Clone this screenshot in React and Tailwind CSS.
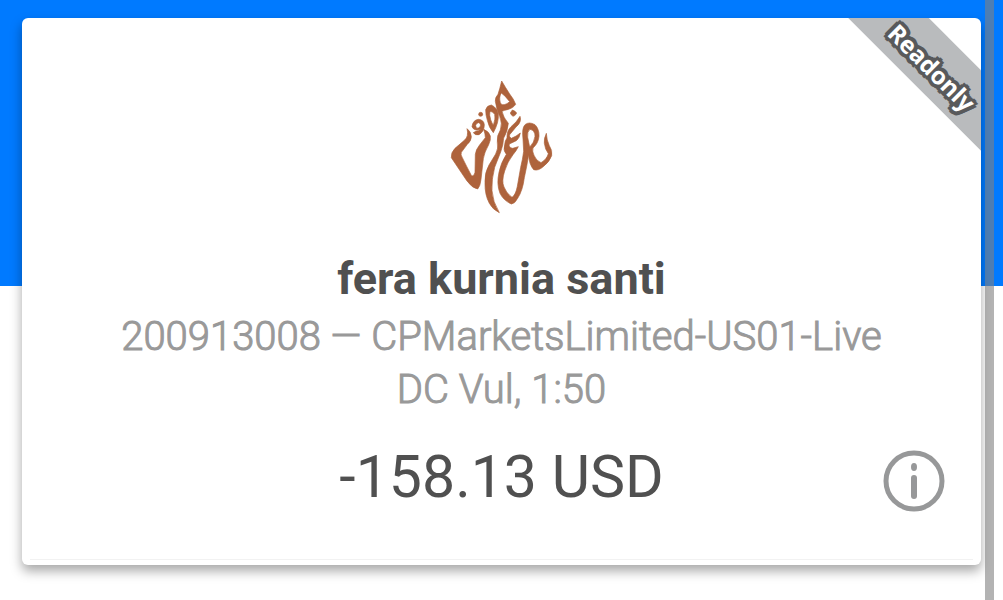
const account = {
  name: "fera kurnia santi",
  login: "200913008",
  server: "CPMarketsLimited-US01-Live",
  broker: "DC Vul",
  leverage: "1:50",
  balance: "-158.13",
  currency: "USD",
};

const BrokerLogo = () => (
  <svg
    viewBox="6 0 420 450"
    className="w-[140px] h-[150px]"
    fill="#ae633c"
    stroke="#ae633c"
    strokeWidth="2"
    strokeLinejoin="round"
    role="img"
    aria-label="Broker logo"
  >
    <path d="M111 176 Q123 184 124 200 Q124 213 112 223 L94 247 Q91 254 97 263 Q108 286 125 318 Q132 320 135 307 L136 253 Q138 238 148 226 L166 203 Q166 193 161 178 Q177 184 181 198 Q183 210 176 224 Q163 247 160 266 L153 328 Q151 349 143 357 Q126 354 111 333 L64 263 Q63 247 75 235 L103 211 Q117 199 111 176Z" />
    <path
      fillRule="evenodd"
      d="M126 170 Q128 151 145 148 Q161 149 163 164 Q163 184 147 194 Q136 197 130 188 L139 183 Q146 184 152 177 Q133 185 126 170Z M137 166 Q139 158 146 158 Q154 161 151 169 Q145 177 139 174Z"
    />
    <circle cx="152" cy="133" r="6" />
    <path
      fillRule="evenodd"
      d="M167 119 Q171 106 184 105 Q203 114 205 133 Q207 157 190 188 Q177 174 172 151 Q167 136 167 119Z M180 124 Q177 135 182 149 Q186 160 190 166 Q197 146 194 133 Q188 124 180 124Z"
    />
    <path
      fillRule="evenodd"
      d="M215 33 Q226 52 239 72 Q252 88 257 103 Q249 116 224 121 L216 124 Q220 143 235 160 Q233 184 221 204 Q220 225 212 246 L194 292 Q184 329 186 362 Q188 395 208 428 Q188 419 178 400 Q164 374 165 338 Q163 309 177 285 L197 252 Q206 235 202 217 Q199 199 211 180 Q218 160 209 139 Q201 124 196 94 Q194 84 204 73 Q209 58 215 33Z M214 69 Q206 80 211 98 Q214 109 231 101 L239 95 Q226 77 214 69Z"
    />
    <path d="M247 120 Q255 122 260 129 Q256 138 249 139 Q242 134 241 129Z" />
    <path
      fillRule="evenodd"
      d="M270 139 Q276 156 258 171 L239 194 Q236 201 244 205 Q258 200 271 189 Q269 204 259 212 L238 222 Q235 232 248 235 L265 230 Q258 244 249 254 Q232 276 224 303 Q214 333 222 351 Q229 370 246 382 Q257 375 262 349 L272 292 Q278 268 281 244 L279 207 Q275 174 285 164 Q297 154 315 164 Q328 177 327 199 Q325 220 309 234 Q306 243 312 256 Q319 273 333 278 Q350 268 355 251 Q345 238 343 220 Q341 207 349 190 Q350 211 358 227 Q368 241 365 257 Q358 276 342 288 Q325 304 311 299 Q297 283 296 254 Q291 287 283 323 Q278 362 263 385 Q254 402 244 402 Q220 391 210 370 Q199 343 207 307 Q212 280 229 253 Q218 241 224 224 Q225 211 231 204 Q230 183 243 170 Q260 157 270 139Z M300 178 Q291 184 293 202 L299 231 Q313 218 315 199 Q315 181 300 178Z"
    />
  </svg>
);

const InfoIcon = () => (
  <svg viewBox="0 0 62 62" className="w-[62px] h-[62px]" aria-hidden="true">
    <circle cx="31" cy="31" r="28" fill="none" stroke="#979899" strokeWidth="5" />
    <ellipse cx="31" cy="17" rx="3" ry="4" fill="#979899" />
    <rect x="28" y="25" width="6" height="24" rx="3" fill="#979899" />
  </svg>
);

const ReadonlyRibbon = () => (
  <div className="absolute top-[18px] -right-[54px] w-[200px] h-[57px] rotate-45 bg-[#b9bbbd] flex items-center justify-center pt-2">
    <span className="font-['Noto_Sans',sans-serif] text-2xl font-bold text-white [text-shadow:4px_0_#58595b,-4px_0_#58595b,0_4px_#58595b,0_-4px_#58595b,3px_3px_#58595b,-3px_3px_#58595b,3px_-3px_#58595b,-3px_-3px_#58595b,2px_0_#58595b,-2px_0_#58595b,0_2px_#58595b,0_-2px_#58595b]">
      Readonly
    </span>
  </div>
);

const AccountCard = ({ account }) => (
  <main className="relative overflow-hidden mx-[22px] bg-white rounded-md shadow-[0_6px_12px_rgba(0,0,0,0.35)] flex flex-col items-center pt-[52px] pb-[5px]">
    <ReadonlyRibbon />
    <BrokerLogo />
    <h1 className="mt-[31px] text-[45px] leading-[56px] font-bold text-[#505050]">
      {account.name}
    </h1>
    <div className="mt-[3px] text-[40px] leading-[53px] font-light text-[#999999] [-webkit-text-stroke:1px_#999999] text-center">
      <p>
        {account.login} — {account.server}
      </p>
      <p>
        {account.broker}, {account.leverage}
      </p>
    </div>
    <div className="mt-[34px] w-full px-[36px] grid grid-cols-[1fr_auto_1fr] items-start">
      <p className="col-start-2 text-[59px] leading-[54px] text-[#505050]">
        {account.balance} {account.currency}
      </p>
      <button
        type="button"
        aria-label="Account information"
        className="justify-self-end cursor-pointer"
      >
        <InfoIcon />
      </button>
    </div>
    <div className="mt-[47px] self-stretch mx-2 border-b border-[#f2f2f2]" />
  </main>
);

export default function App() {
  return (
    <div className="relative min-h-screen overflow-hidden pt-[18px] pb-[35px] font-[Roboto,sans-serif] bg-[linear-gradient(#007aff_286px,#ffffff_286px)]">
      <AccountCard account={account} />
      <div className="absolute inset-y-0 right-[9px] w-[9px] bg-[#808080]/60" />
    </div>
  );
}
